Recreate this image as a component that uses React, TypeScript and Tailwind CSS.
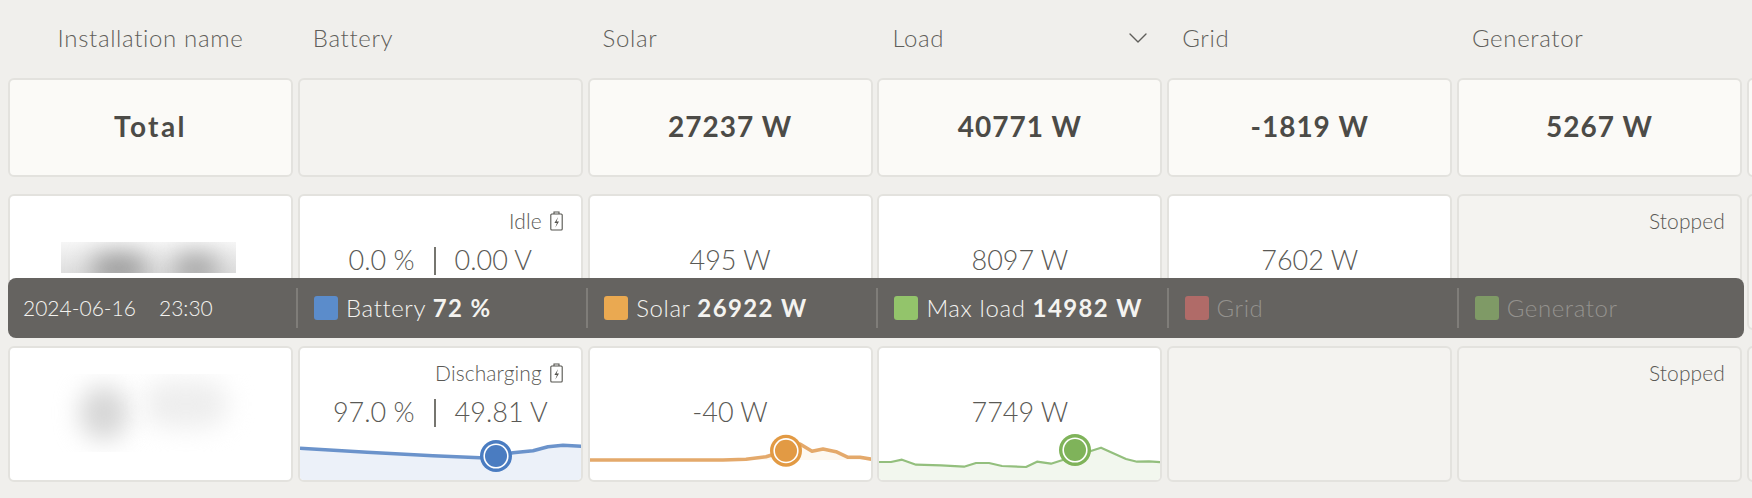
import { ChevronDown } from "lucide-react";

const cardBase = "h-full rounded-[6px] border-2 border-[#e3e2de] relative overflow-hidden";
const totalCard = `${cardBase} bg-[#fbfaf7] flex items-center justify-center pb-[3px] text-[28px] font-bold text-[#4c4b47]`;
const segment = "h-[40px] border-l-2 border-[#7f7d79] pl-[16px] flex items-center gap-[8px]";

const BatteryIcon = () => (
  <svg width="13" height="20" viewBox="0 0 13 20" fill="none" stroke="#55544f" strokeWidth="1.1" className="shrink-0">
    <rect x="0.8" y="3" width="11.4" height="16" rx="1" />
    <path d="M4 3V1h5v2" />
    <path d="M8.2 6 4.4 12h2.5l-1.6 4.6L9 10.4H6.5z" fill="#55544f" stroke="none" />
  </svg>
);

const Status = ({ label, icon }: { label: string; icon?: boolean }) => (
  <div
    className={`absolute top-[13px] flex items-center gap-[8px] text-[21px] tracking-[0.1px] leading-[24px] text-[#5a5955] ${
      icon ? "right-[18px]" : "right-[15px]"
    }`}
  >
    {label}
    {icon && <BatteryIcon />}
  </div>
);

const Value = ({ children }: { children: React.ReactNode }) => (
  <div className="absolute top-[46px] inset-x-0 text-center text-[27px] leading-[36px] text-[#5a5955]">
    {children}
  </div>
);

const Pipe = () => <span className="inline-block w-[2px] h-[28px] mx-[19px] align-[-5px] bg-[#76756f]" />;

const Spark = ({
  points,
  fillPoints,
  line,
  fill,
  dot,
  cy,
  width = 3.5,
}: {
  points: string;
  fillPoints: string;
  line: string;
  fill: string;
  dot: string;
  cy: number;
  width?: number;
}) => (
  <svg viewBox="0 0 282 50" className="absolute left-0 bottom-0 w-[282px] h-[50px]">
    <polygon points={fillPoints} fill={fill} />
    <polyline points={points} fill="none" stroke={line} strokeWidth={width} strokeLinejoin="round" />
    <circle cx="196" cy={cy} r="16" fill={dot} />
    <circle cx="196" cy={cy} r="12.6" fill="#fff" />
    <circle cx="196" cy={cy} r="11" fill={dot} />
  </svg>
);

const batteryLine = "0,18.3 67,22.3 133,25.7 180,27.7 196,26 213,22.7 233,20.7 248,16.7 263,15.3 282,16.3";
const solarLine = "0,30 133,30 156,29.3 176,26.7 196,20.7 210,14 222,21.3 233,19 246,21.7 258,27.3 270,27.3 282,29.3";
const loadLine =
  "0,32 12,32 23,29.7 37,34.7 62,35.3 85,36.7 97,33 110,33 123,36 147,37 158,31.7 172,33.7 222,17.7 247,29 258,31.7 270,31.3 282,32.3";

const Blur = ({ className }: { className: string }) => <div className={`absolute ${className}`} />;

const Swatch = ({ color }: { color: string }) => <span className={`w-[24px] h-[24px] rounded-[3px] shrink-0 ${color}`} />;

const headers = ["Battery", "Solar", "Load", "Grid", "Generator"];

export default function App() {
  return (
    <div className="relative w-[1752px] h-[498px] overflow-hidden bg-[#f0efec] font-[Lato,sans-serif] font-light">
      <div className="grid grid-cols-[repeat(7,285px)] grid-rows-[78px_99px_136px_136px] gap-x-[4.8px] pl-[8px]">
        {/* header row */}
        <div className="flex items-center justify-center text-[24px] tracking-[0.65px] text-[#5f5e5a] pb-[3px]">Installation name</div>
        {headers.map((h) => (
          <div key={h} className="flex items-center justify-between pl-[15px] pr-[8px] pb-[3px] text-[24px] tracking-[0.65px] text-[#5f5e5a]">
            {h}
            {h === "Load" && <ChevronDown size={32} strokeWidth={1} />}
          </div>
        ))}
        <div />

        {/* totals */}
        <div className={`${totalCard} tracking-[2.4px]`}>Total</div>
        <div className={`${cardBase} bg-[#f4f3f0]`} />
        {["27237 W", "40771 W", "-1819 W", "5267 W"].map((v) => (
          <div key={v} className={`${totalCard} tracking-[1px]`}>
            {v}
          </div>
        ))}
        <div className={`${cardBase} bg-[#fbfaf7]`} />

        {/* first installation */}
        <div className={`${cardBase} bg-white mt-[17px] h-[136px]`}>
          <div className="absolute left-[51px] top-[46px] w-[175px] h-[31px] overflow-hidden bg-linear-to-b from-[#f6f6f6] to-[#dedede]">
            <Blur className="left-[30px] top-[12px] w-[56px] h-[30px] rounded-full bg-[#999999] blur-md" />
            <Blur className="left-[112px] top-[12px] w-[46px] h-[30px] rounded-full bg-[#a4a4a4] blur-md" />
          </div>
        </div>
        <div className={`${cardBase} bg-white mt-[17px] h-[136px]`}>
          <Status label="Idle" icon />
          <Value>
            0.0 %<Pipe />0.00 V
          </Value>
        </div>
        <div className={`${cardBase} bg-white mt-[17px] h-[136px]`}>
          <Value>495 W</Value>
        </div>
        <div className={`${cardBase} bg-white mt-[17px] h-[136px]`}>
          <Value>8097 W</Value>
        </div>
        <div className={`${cardBase} bg-white mt-[17px] h-[136px]`}>
          <Value>7602 W</Value>
        </div>
        <div className={`${cardBase} bg-[#f4f3f0] mt-[17px] h-[136px]`}>
          <Status label="Stopped" />
        </div>
        <div className={`${cardBase} bg-[#f4f3f0] mt-[17px] h-[136px]`} />

        {/* second installation */}
        <div className={`${cardBase} bg-white mt-[33px] h-[136px]`}>
          <div className="absolute left-[30px] top-[26px] w-[220px] h-[78px] overflow-hidden">
            <Blur className="left-[40px] top-[12px] w-[48px] h-[54px] rounded-full bg-[#d6d6d6] blur-md" />
            <Blur className="left-[104px] top-[6px] w-[84px] h-[48px] rounded-full bg-[#eeeeee] blur-md" />
          </div>
        </div>
        <div className={`${cardBase} bg-white mt-[33px] h-[136px]`}>
          <Status label="Discharging" icon />
          <Value>
            97.0 %<Pipe />49.81 V
          </Value>
          <Spark
            points={batteryLine}
            fillPoints={`${batteryLine} 282,50 0,50`}
            line="#6b93cb"
            fill="#ecf1f9"
            dot="#4a7cc1"
            cy={26}
          />
        </div>
        <div className={`${cardBase} bg-white mt-[33px] h-[136px]`}>
          <Value>-40 W</Value>
          <Spark
            points={solarLine}
            fillPoints={`${solarLine} 282,30 0,30`}
            line="#e4a96b"
            fill="#fdf8f1"
            dot="#e29a44"
            cy={20.7}
          />
        </div>
        <div className={`${cardBase} bg-white mt-[33px] h-[136px]`}>
          <Value>7749 W</Value>
          <Spark
            points={loadLine}
            fillPoints={`${loadLine} 282,50 0,50`}
            line="#93bf7d"
            fill="#f2f7ee"
            dot="#7fb35a"
            cy={20}
            width={2.2}
          />
        </div>
        <div className={`${cardBase} bg-[#f4f3f0] mt-[33px] h-[136px]`} />
        <div className={`${cardBase} bg-[#f4f3f0] mt-[33px] h-[136px]`}>
          <Status label="Stopped" />
        </div>
        <div className={`${cardBase} bg-[#f4f3f0] mt-[33px] h-[136px]`} />
      </div>

      {/* hover tooltip over the rows */}
      <div className="absolute left-[8px] top-[278px] w-[1736px] h-[60px] rounded-[8px] bg-[#656360] grid grid-cols-[288px_repeat(5,290.2px)] items-center text-[24px] tracking-[0.6px] text-[#f4f3f0]">
        <div className="pl-[15px] flex gap-[23px] text-[21px] tracking-normal">
          <span>2024-06-16</span>
          <span>23:30</span>
        </div>
        <div className={segment}>
          <Swatch color="bg-[#5b8ccb]" />
          <span>
            Battery <b className="font-bold tracking-[1.4px]">72 %</b>
          </span>
        </div>
        <div className={segment}>
          <Swatch color="bg-[#eaa951]" />
          <span>
            Solar <b className="font-bold tracking-[1.4px]">26922 W</b>
          </span>
        </div>
        <div className={segment}>
          <Swatch color="bg-[#93c46b]" />
          <span>
            Max load <b className="font-bold tracking-[1.4px]">14982 W</b>
          </span>
        </div>
        <div className={`${segment} text-[#94928e]`}>
          <Swatch color="bg-[#b06b68]" />
          <span>Grid</span>
        </div>
        <div className={`${segment} text-[#94928e]`}>
          <Swatch color="bg-[#7f9a66]" />
          <span>Generator</span>
        </div>
      </div>
    </div>
  );
}
